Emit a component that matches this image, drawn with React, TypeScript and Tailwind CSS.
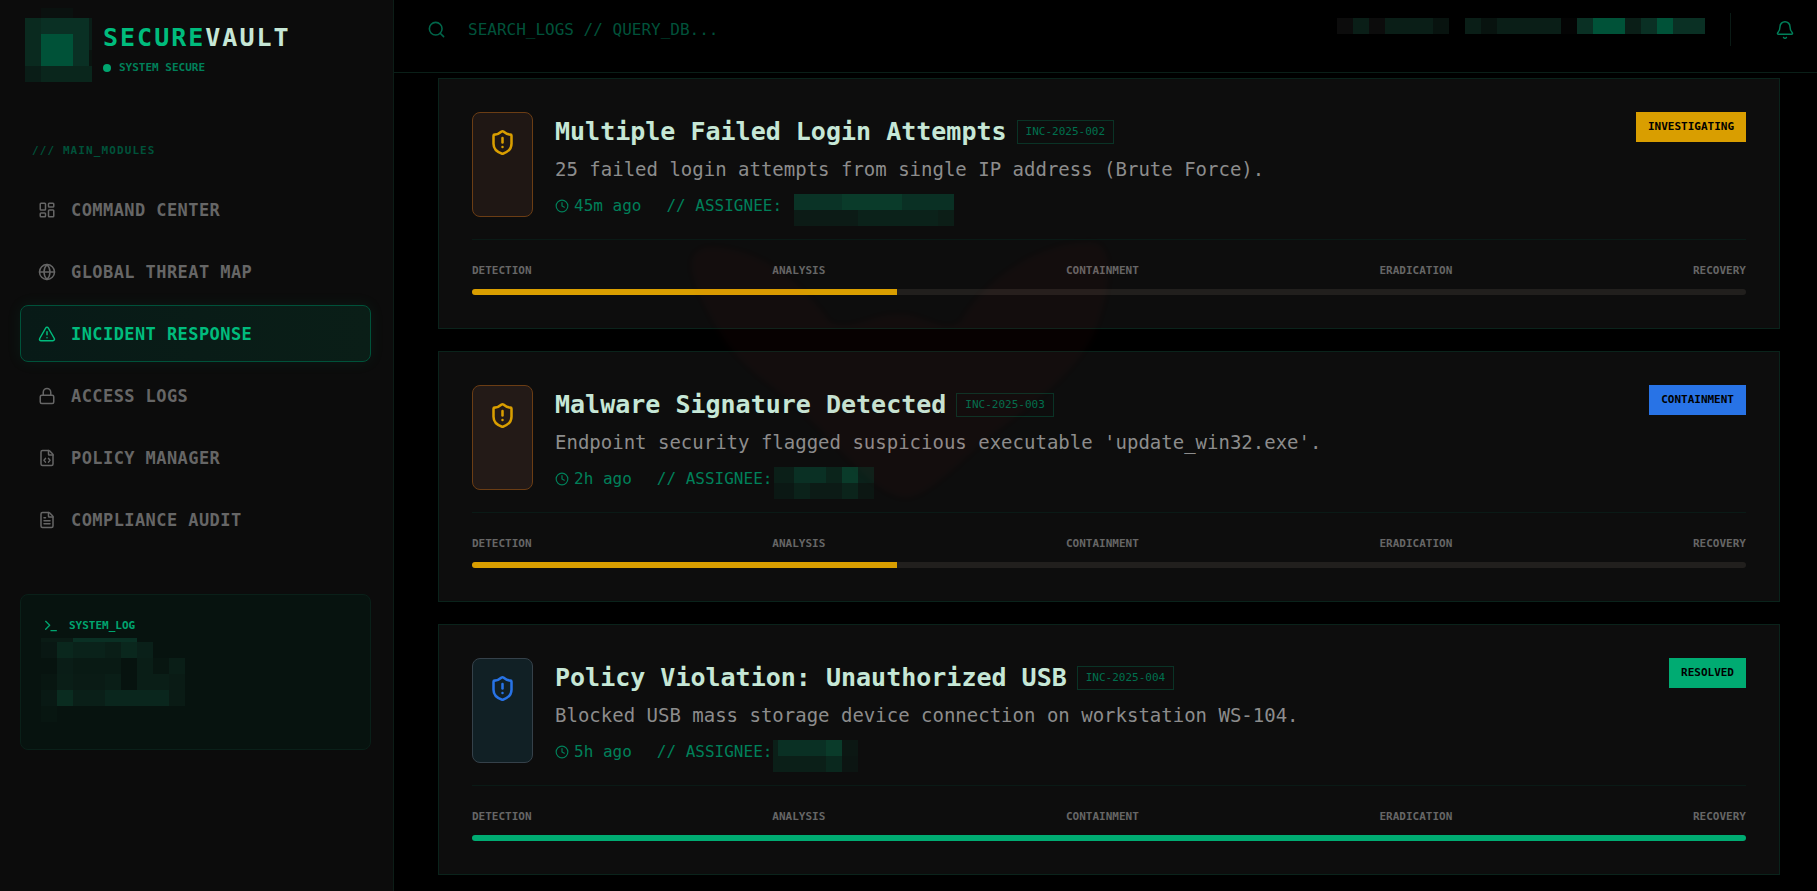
import React from 'react';
import {
  Bell,
  Clock,
  FileCode,
  FileText,
  Globe,
  LayoutDashboard,
  Lock,
  Search,
  ShieldAlert,
  Terminal,
  TriangleAlert,
  type LucideIcon,
} from 'lucide-react';

// x, y, width, height, fill
type Block = [number, number, number, number, string];

function Mosaic({ width, height, blocks, className = '' }: { width: number; height: number; blocks: Block[]; className?: string }) {
  return (
    <svg
      aria-hidden="true"
      width={width}
      height={height}
      viewBox={`0 0 ${width} ${height}`}
      shapeRendering="crispEdges"
      className={`shrink-0 ${className}`}
    >
      {blocks.map(([x, y, w, h, fill], i) => (
        <rect key={i} x={x} y={y} width={w} height={h} fill={fill} />
      ))}
    </svg>
  );
}

const LOGO: Block[] = [
  [16, 0, 32, 10, '#0a110f'],
  [0, 10, 16, 48, '#0a2a1f'],
  [16, 10, 48, 48, '#0a3024'],
  [16, 26, 32, 32, '#005238'],
  [64, 10, 3, 32, '#0a1d17'],
  [64, 42, 3, 16, '#0a130f'],
  [0, 58, 16, 16, '#0a1d17'],
  [16, 58, 51, 16, '#0a261c'],
];

const HEADER_STATS: Block[] = [
  [0, 0, 16, 16, '#0c0c0c'],
  [16, 0, 16, 16, '#0a1e17'],
  [32, 0, 16, 16, '#0c0c0c'],
  [48, 0, 48, 16, '#0a1e17'],
  [96, 0, 16, 16, '#08130f'],
  [128, 0, 16, 16, '#0a1e17'],
  [144, 0, 16, 16, '#08130f'],
  [160, 0, 64, 16, '#0a1e17'],
  [224, 0, 16, 16, '#040404'],
  [240, 0, 16, 16, '#0a3024'],
  [256, 0, 32, 16, '#005238'],
  [288, 0, 16, 16, '#0a1e17'],
  [304, 0, 16, 16, '#0a3024'],
  [320, 0, 16, 16, '#005238'],
  [336, 0, 32, 16, '#0a3024'],
];

const LOG_LINES: Block[] = [
  [0, 0, 32, 4, '#0a1b15'],
  [32, 0, 64, 4, '#0a3024'],
  [0, 4, 16, 16, '#091713'],
  [16, 4, 16, 16, '#0a271d'],
  [32, 4, 32, 16, '#0a221a'],
  [64, 4, 16, 16, '#0a1e17'],
  [80, 4, 16, 16, '#0a271d'],
  [96, 4, 16, 16, '#0a2019'],
  [16, 20, 16, 16, '#0a1d17'],
  [32, 20, 48, 16, '#091a14'],
  [96, 20, 16, 16, '#0a1e17'],
  [112, 20, 16, 16, '#081611'],
  [128, 20, 16, 16, '#0a1e17'],
  [0, 36, 16, 16, '#081611'],
  [16, 36, 16, 16, '#0a1e17'],
  [32, 36, 32, 16, '#0a1b15'],
  [64, 36, 16, 16, '#0a1e17'],
  [96, 36, 32, 16, '#0a1e17'],
  [128, 36, 16, 16, '#0a1b15'],
  [0, 52, 16, 16, '#091914'],
  [16, 52, 16, 16, '#0a2c20'],
  [32, 52, 32, 16, '#0a1f18'],
  [64, 52, 64, 16, '#0a261d'],
  [128, 52, 16, 16, '#0a1b15'],
  [0, 68, 16, 16, '#081611'],
];

const NAV: { label: string; icon: LucideIcon; active?: boolean }[] = [
  { label: 'COMMAND CENTER', icon: LayoutDashboard },
  { label: 'GLOBAL THREAT MAP', icon: Globe },
  { label: 'INCIDENT RESPONSE', icon: TriangleAlert, active: true },
  { label: 'ACCESS LOGS', icon: Lock },
  { label: 'POLICY MANAGER', icon: FileCode },
  { label: 'COMPLIANCE AUDIT', icon: FileText },
];

const STAGES = ['DETECTION', 'ANALYSIS', 'CONTAINMENT', 'ERADICATION', 'RECOVERY'];

interface Incident {
  id: string;
  title: string;
  summary: string;
  age: string;
  status: string;
  progress: number;
  iconClass: string;
  statusClass: string;
  barClass: string;
  assignee: Block[];
}

const INCIDENTS: Incident[] = [
  {
    id: 'INC-2025-002',
    title: 'Multiple Failed Login Attempts',
    summary: '25 failed login attempts from single IP address (Brute Force).',
    age: '45m ago',
    status: 'INVESTIGATING',
    progress: 100 / 3,
    iconClass: 'border-[#6b3d14] bg-[#1f1714] text-[#d99e00]',
    statusClass: 'bg-[#d99e00]',
    barClass: 'bg-[#d99e00]',
    assignee: [
      [12, 0, 48, 16, '#0a3326'],
      [60, 0, 60, 16, '#0a3b2a'],
      [120, 0, 52, 16, '#0a3024'],
      [12, 16, 64, 16, '#0c1b16'],
      [76, 16, 80, 16, '#0b221a'],
      [156, 16, 16, 16, '#0c1e17'],
    ],
  },
  {
    id: 'INC-2025-003',
    title: 'Malware Signature Detected',
    summary: "Endpoint security flagged suspicious executable 'update_win32.exe'.",
    age: '2h ago',
    status: 'CONTAINMENT',
    progress: 100 / 3,
    iconClass: 'border-[#6b3d14] bg-[#231a17] text-[#d99e00]',
    statusClass: 'bg-[#2873e6]',
    barClass: 'bg-[#d99e00]',
    assignee: [
      [2, 0, 20, 16, '#0b1f18'],
      [22, 0, 32, 16, '#0a3024'],
      [54, 0, 16, 16, '#0b241b'],
      [70, 0, 16, 16, '#0a3b2a'],
      [86, 0, 16, 16, '#0b211a'],
      [2, 16, 20, 16, '#0b1814'],
      [22, 16, 16, 16, '#0b221a'],
      [38, 16, 32, 16, '#0c1b16'],
      [70, 16, 16, 16, '#0b241b'],
      [86, 16, 16, 16, '#0c1713'],
    ],
  },
  {
    id: 'INC-2025-004',
    title: 'Policy Violation: Unauthorized USB',
    summary: 'Blocked USB mass storage device connection on workstation WS-104.',
    age: '5h ago',
    status: 'RESOLVED',
    progress: 100,
    iconClass: 'border-[#35414a] bg-[#112025] text-[#2873e6]',
    statusClass: 'bg-[#00ab72]',
    barClass: 'bg-[#00ab72]',
    assignee: [
      [1, 0, 5, 32, '#0b1f18'],
      [6, 0, 48, 16, '#0a3024'],
      [54, 0, 16, 16, '#0a3b2a'],
      [70, 0, 16, 16, '#0c1713'],
      [6, 16, 48, 16, '#0b1f18'],
      [54, 16, 16, 16, '#0a281e'],
      [70, 16, 16, 16, '#0c1512'],
    ],
  },
];

function Sidebar() {
  return (
    <aside className="flex w-[394px] shrink-0 flex-col border-r border-[#0c1d17] bg-[#0c0c0c] pr-[22px] pl-5">
      <div className="flex gap-[11px] pt-2 pl-[5px]">
        <Mosaic width={67} height={74} blocks={LOGO} />
        <div className="pt-[13px]">
          <h1 className="text-[25px] leading-[34px] font-bold tracking-[2px] text-[#c6e7d6]">
            <span className="text-[#00bc7d]">SECURE</span>VAULT
          </h1>
          <p className="mt-[5px] flex items-center gap-2 text-[11px] leading-4 font-bold text-[#00805a]">
            <span className="size-2 rounded-full bg-[#00a56f]" />
            SYSTEM SECURE
          </p>
        </div>
      </div>

      <h2 className="mt-[61px] pl-3 text-[11px] leading-4 font-bold tracking-widest text-[#00523a]">/// MAIN_MODULES</h2>

      <nav className="mt-[22px] flex flex-col gap-[5px]">
        {NAV.map(({ label, icon: Icon, active }) => (
          <a
            key={label}
            href="#"
            aria-current={active ? 'page' : undefined}
            className={`flex h-[57px] items-center gap-[15px] rounded-lg border px-[17px] text-[17px] font-bold tracking-wide ${
              active
                ? 'border-[#00523a] bg-linear-to-r from-[#081a17] to-[#0a1e17] text-[#00bc7d] shadow-[0_0_15px_rgba(0,188,125,0.08)]'
                : 'border-transparent text-[#666666]'
            }`}
          >
            <Icon size={18} strokeWidth={2} />
            <span className="pt-0.5">{label}</span>
          </a>
        ))}
      </nav>

      <section className="mt-[46px] h-[156px] rounded-lg border border-[#0a2019] bg-[#07130f] px-[20px] pt-[23px]">
        <h2 className="flex items-center gap-[10px] pl-[2px] text-[11px] leading-4 font-bold text-[#00a56f]">
          <Terminal size={16} strokeWidth={2} />
          SYSTEM_LOG
        </h2>
        <Mosaic width={144} height={84} blocks={LOG_LINES} className="mt-1" />
      </section>
    </aside>
  );
}

function TopBar() {
  return (
    <header className="flex justify-between border-b border-[#0a1f18] pt-[13px] pr-[22px] pb-[26px] pl-[33px]">
      <label className="flex h-[33px] flex-1 items-center gap-[22px] text-[#00664a]">
        <Search size={19} strokeWidth={2} />
        <input
          type="search"
          aria-label="Search logs"
          placeholder="SEARCH_LOGS // QUERY_DB..."
          className="w-80 bg-transparent text-base outline-none placeholder:text-[#00523a]"
        />
      </label>
      <div className="flex h-[33px] items-center">
        <Mosaic width={368} height={16} blocks={HEADER_STATS} className="-mt-2" />
        <span className="ml-[25px] h-full w-px bg-[#0a1a15]" />
        <button type="button" aria-label="Notifications" className="ml-11 text-[#00805a]">
          <Bell size={20} strokeWidth={1.75} />
        </button>
      </div>
    </header>
  );
}

function IncidentCard({ incident }: { incident: Incident }) {
  return (
    <article className="border border-[#0a231b] bg-[#0d0d0d] p-[33px]">
      <div className="flex gap-[22px]">
        <div className={`rounded-lg border p-4 ${incident.iconClass}`}>
          <ShieldAlert size={27} strokeWidth={2.25} />
        </div>
        <div className="min-w-0 flex-1">
          <div className="flex items-center gap-[10px]">
            <h3 className="pt-px text-[25px] leading-[38px] font-bold text-[#c6e7d6]">{incident.title}</h3>
            <span className="border border-[#0a3326] px-2 text-[11px] leading-[22px] text-[#00704e]">{incident.id}</span>
          </div>
          <p className="mt-1 text-[19px] leading-7 text-[#8c8c8c]">{incident.summary}</p>
          <div className="mt-[11px] flex h-[23px] gap-[25px] text-base leading-[23px] text-[#00805a]">
            <span className="flex items-center gap-[5px]">
              <Clock size={14} strokeWidth={2} />
              {incident.age}
            </span>
            <span className="flex">
              // ASSIGNEE:
              <Mosaic width={172} height={32} blocks={incident.assignee} />
            </span>
          </div>
        </div>
        <span className={`self-start px-3 text-[11px] leading-[30px] font-bold text-black ${incident.statusClass}`}>
          {incident.status}
        </span>
      </div>

      <div className="mt-[22px] border-t border-[#0a1a16] pt-[23px]">
        <ol className="flex justify-between text-[11px] leading-4 font-bold text-[#666666]">
          {STAGES.map((stage) => (
            <li key={stage}>{stage}</li>
          ))}
        </ol>
        <div
          role="progressbar"
          aria-label={`${incident.id} response progress`}
          aria-valuenow={Math.round(incident.progress)}
          className="mt-[10px] h-[6px] overflow-hidden rounded-full bg-[#211f1d]"
        >
          <div className={`h-full ${incident.barClass}`} style={{ width: `${incident.progress}%` }} />
        </div>
      </div>
    </article>
  );
}

// Faint red alert glow laid over the incident list
function AlertGlow() {
  return (
    <svg
      aria-hidden="true"
      viewBox="0 0 440 280"
      className="pointer-events-none absolute top-[157px] left-[286px] h-[280px] w-[440px] blur-[3px]"
    >
      <path
        d="M12 42C8 22 20 14 44 18C90 24 126 58 150 92C172 102 190 84 218 84C246 84 262 104 280 92C310 40 370 10 412 12C436 14 432 60 414 104C394 146 350 176 316 202C284 226 252 266 226 268C196 266 170 228 130 190C96 156 64 142 42 106C28 84 16 62 12 42Z"
        fill="rgba(255,20,20,0.028)"
      />
    </svg>
  );
}

export default function App() {
  return (
    <div className="flex min-h-screen bg-black font-['DejaVu_Sans_Mono','Liberation_Mono',monospace]">
      <Sidebar />
      <div className="flex min-w-0 flex-1 flex-col">
        <TopBar />
        <main className="relative flex flex-col gap-[22px] pt-[5px] pr-[37px] pl-11">
          {INCIDENTS.map((incident) => (
            <IncidentCard key={incident.id} incident={incident} />
          ))}
          <AlertGlow />
        </main>
      </div>
    </div>
  );
}
